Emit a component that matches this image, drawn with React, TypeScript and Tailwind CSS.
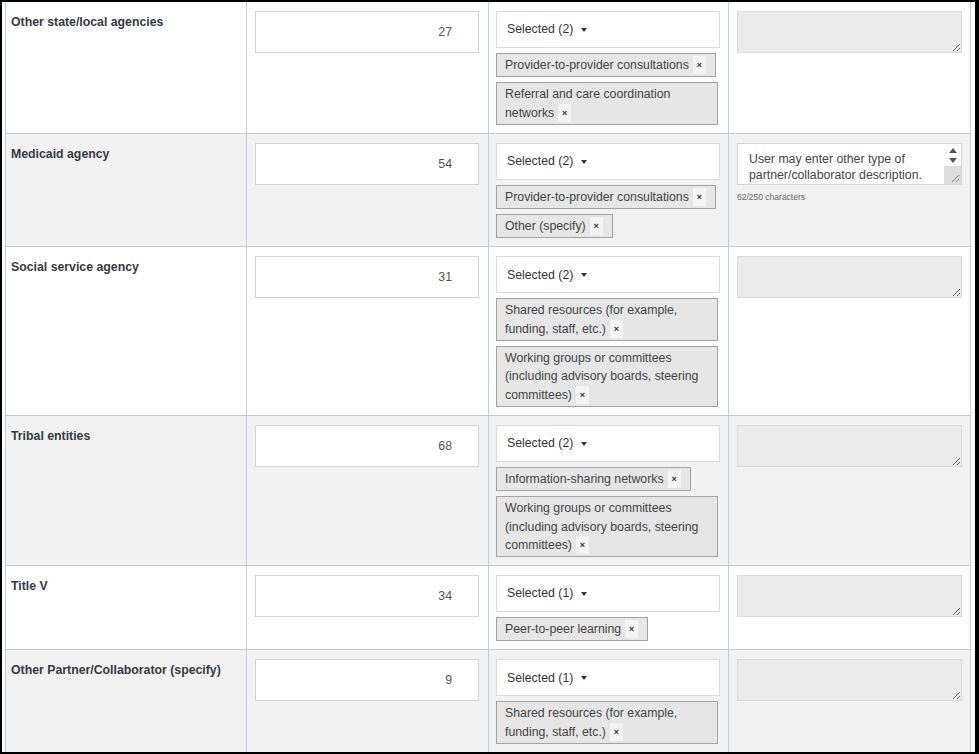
import React from 'react';

interface PartnerRow {
    label: string;
    count: string;
    selected: string[];
    note?: string;
}

const rows: PartnerRow[] = [
    {
        label: 'Other state/local agencies',
        count: '27',
        selected: ['Provider-to-provider consultations', 'Referral and care coordination networks'],
    },
    {
        label: 'Medicaid agency',
        count: '54',
        selected: ['Provider-to-provider consultations', 'Other (specify)'],
        note: 'User may enter other type of partner/collaborator description.',
    },
    {
        label: 'Social service agency',
        count: '31',
        selected: [
            'Shared resources (for example, funding, staff, etc.)',
            'Working groups or committees (including advisory boards, steering committees)',
        ],
    },
    {
        label: 'Tribal entities',
        count: '68',
        selected: [
            'Information-sharing networks',
            'Working groups or committees (including advisory boards, steering committees)',
        ],
    },
    {
        label: 'Title V',
        count: '34',
        selected: ['Peer-to-peer learning'],
    },
    {
        label: 'Other Partner/Collaborator (specify)',
        count: '9',
        selected: ['Shared resources (for example, funding, staff, etc.)'],
    },
];

function Grip() {
    return (
        <svg width="9" height="9" viewBox="0 0 9 9" className="block">
            <path d="M8 1 L1 8 M8 5 L5 8" stroke="#8a8a8a" strokeWidth="1" />
        </svg>
    );
}

function Chip({ text }: { text: string }) {
    return (
        <span className="max-w-[222px] border border-[#a3a3a3] bg-[#e6e6e6] py-[2px] pl-[8px] pr-[9px] leading-[18.3px] text-[#444]">
            {text}
            <span className="ml-[4px] inline-block w-[13px] bg-[#f4f4f4] text-center align-top text-[9px] font-bold leading-[18.3px] text-[#333]">×</span>
        </span>
    );
}

function NoteBox({ note }: { note?: string }) {
    if (!note) {
        return (
            <textarea
                disabled
                className="block h-[42px] w-full resize-y border border-[#dadada] bg-[#ebebeb]"
            />
        );
    }
    return (
        <div>
            <div className="relative h-[42px] w-full overflow-hidden border border-[#d6d6d6] bg-white">
                <p className="pl-[11px] pr-[24px] pt-[7px] leading-[16px] text-[#444]">{note}</p>
                <div className="absolute right-0 top-0 flex h-full w-[17px] flex-col items-center">
                    <span className="mt-[4px] h-0 w-0 border-x-[4px] border-b-[5px] border-x-transparent border-b-[#555]" />
                    <span className="mt-[5px] h-0 w-0 border-x-[4px] border-t-[5px] border-x-transparent border-t-[#555]" />
                    <div className="mt-auto flex h-[18px] w-full items-end justify-end bg-[#dcdcdc] p-[1px]">
                        <Grip />
                    </div>
                </div>
            </div>
            <p className="mt-[6px] text-[8.5px] text-[#666]">62/250 characters</p>
        </div>
    );
}

export default function App() {
    return (
        <div
            className="h-[754px] w-[979px] overflow-hidden border-b-2 border-l-2 border-r-4 border-t-2 border-black bg-white pb-[1px] pl-[3px] pr-[4px] text-[12.3px]"
            style={{ fontFamily: '"Liberation Sans", Arial, sans-serif' }}
        >
            <div className="border-x border-[#c2cedb]">
                {rows.map((row, i) => (
                    <div
                        key={row.label}
                        className={`grid grid-cols-[240px_242px_240px_242px] border-b border-[#c8c8c8] ${i % 2 === 1 ? 'bg-[#f2f2f2]' : 'bg-white'}`}
                    >
                        {/* Partner label */}
                        <div className="px-[5px] pb-[8px] pt-[12px] font-bold leading-[17px] text-[#333b47]">{row.label}</div>

                        {/* Count */}
                        <div className="border-l border-[#c2cedb] px-[8px] pb-[8px] pt-[9px]">
                            <input
                                readOnly
                                value={row.count}
                                className="block h-[42px] w-[224px] border border-[#d4d4d4] bg-white pr-[26px] text-right text-[#555] outline-none"
                            />
                        </div>

                        {/* Type of collaboration */}
                        <div className="border-l border-[#c2cedb] pb-[8px] pl-[7px] pr-[8px] pt-[9px]">
                            <div className="flex h-[37px] items-center border border-[#dcdcdc] bg-white pl-[10px] text-[#333]">
                                <span>Selected ({row.selected.length})</span>
                                <span className="ml-[8px] mt-[1px] h-0 w-0 border-x-[3.5px] border-t-[4px] border-x-transparent border-t-[#333]" />
                            </div>
                            <div className="mt-[5px] flex flex-col items-start gap-[5px]">
                                {row.selected.map((s) => (
                                    <Chip key={s} text={s} />
                                ))}
                            </div>
                        </div>

                        {/* Other description */}
                        <div className="border-l border-[#c2cedb] pb-[8px] pl-[8px] pr-[8px] pt-[9px]">
                            <NoteBox note={row.note} />
                        </div>
                    </div>
                ))}
            </div>
        </div>
    );
}
